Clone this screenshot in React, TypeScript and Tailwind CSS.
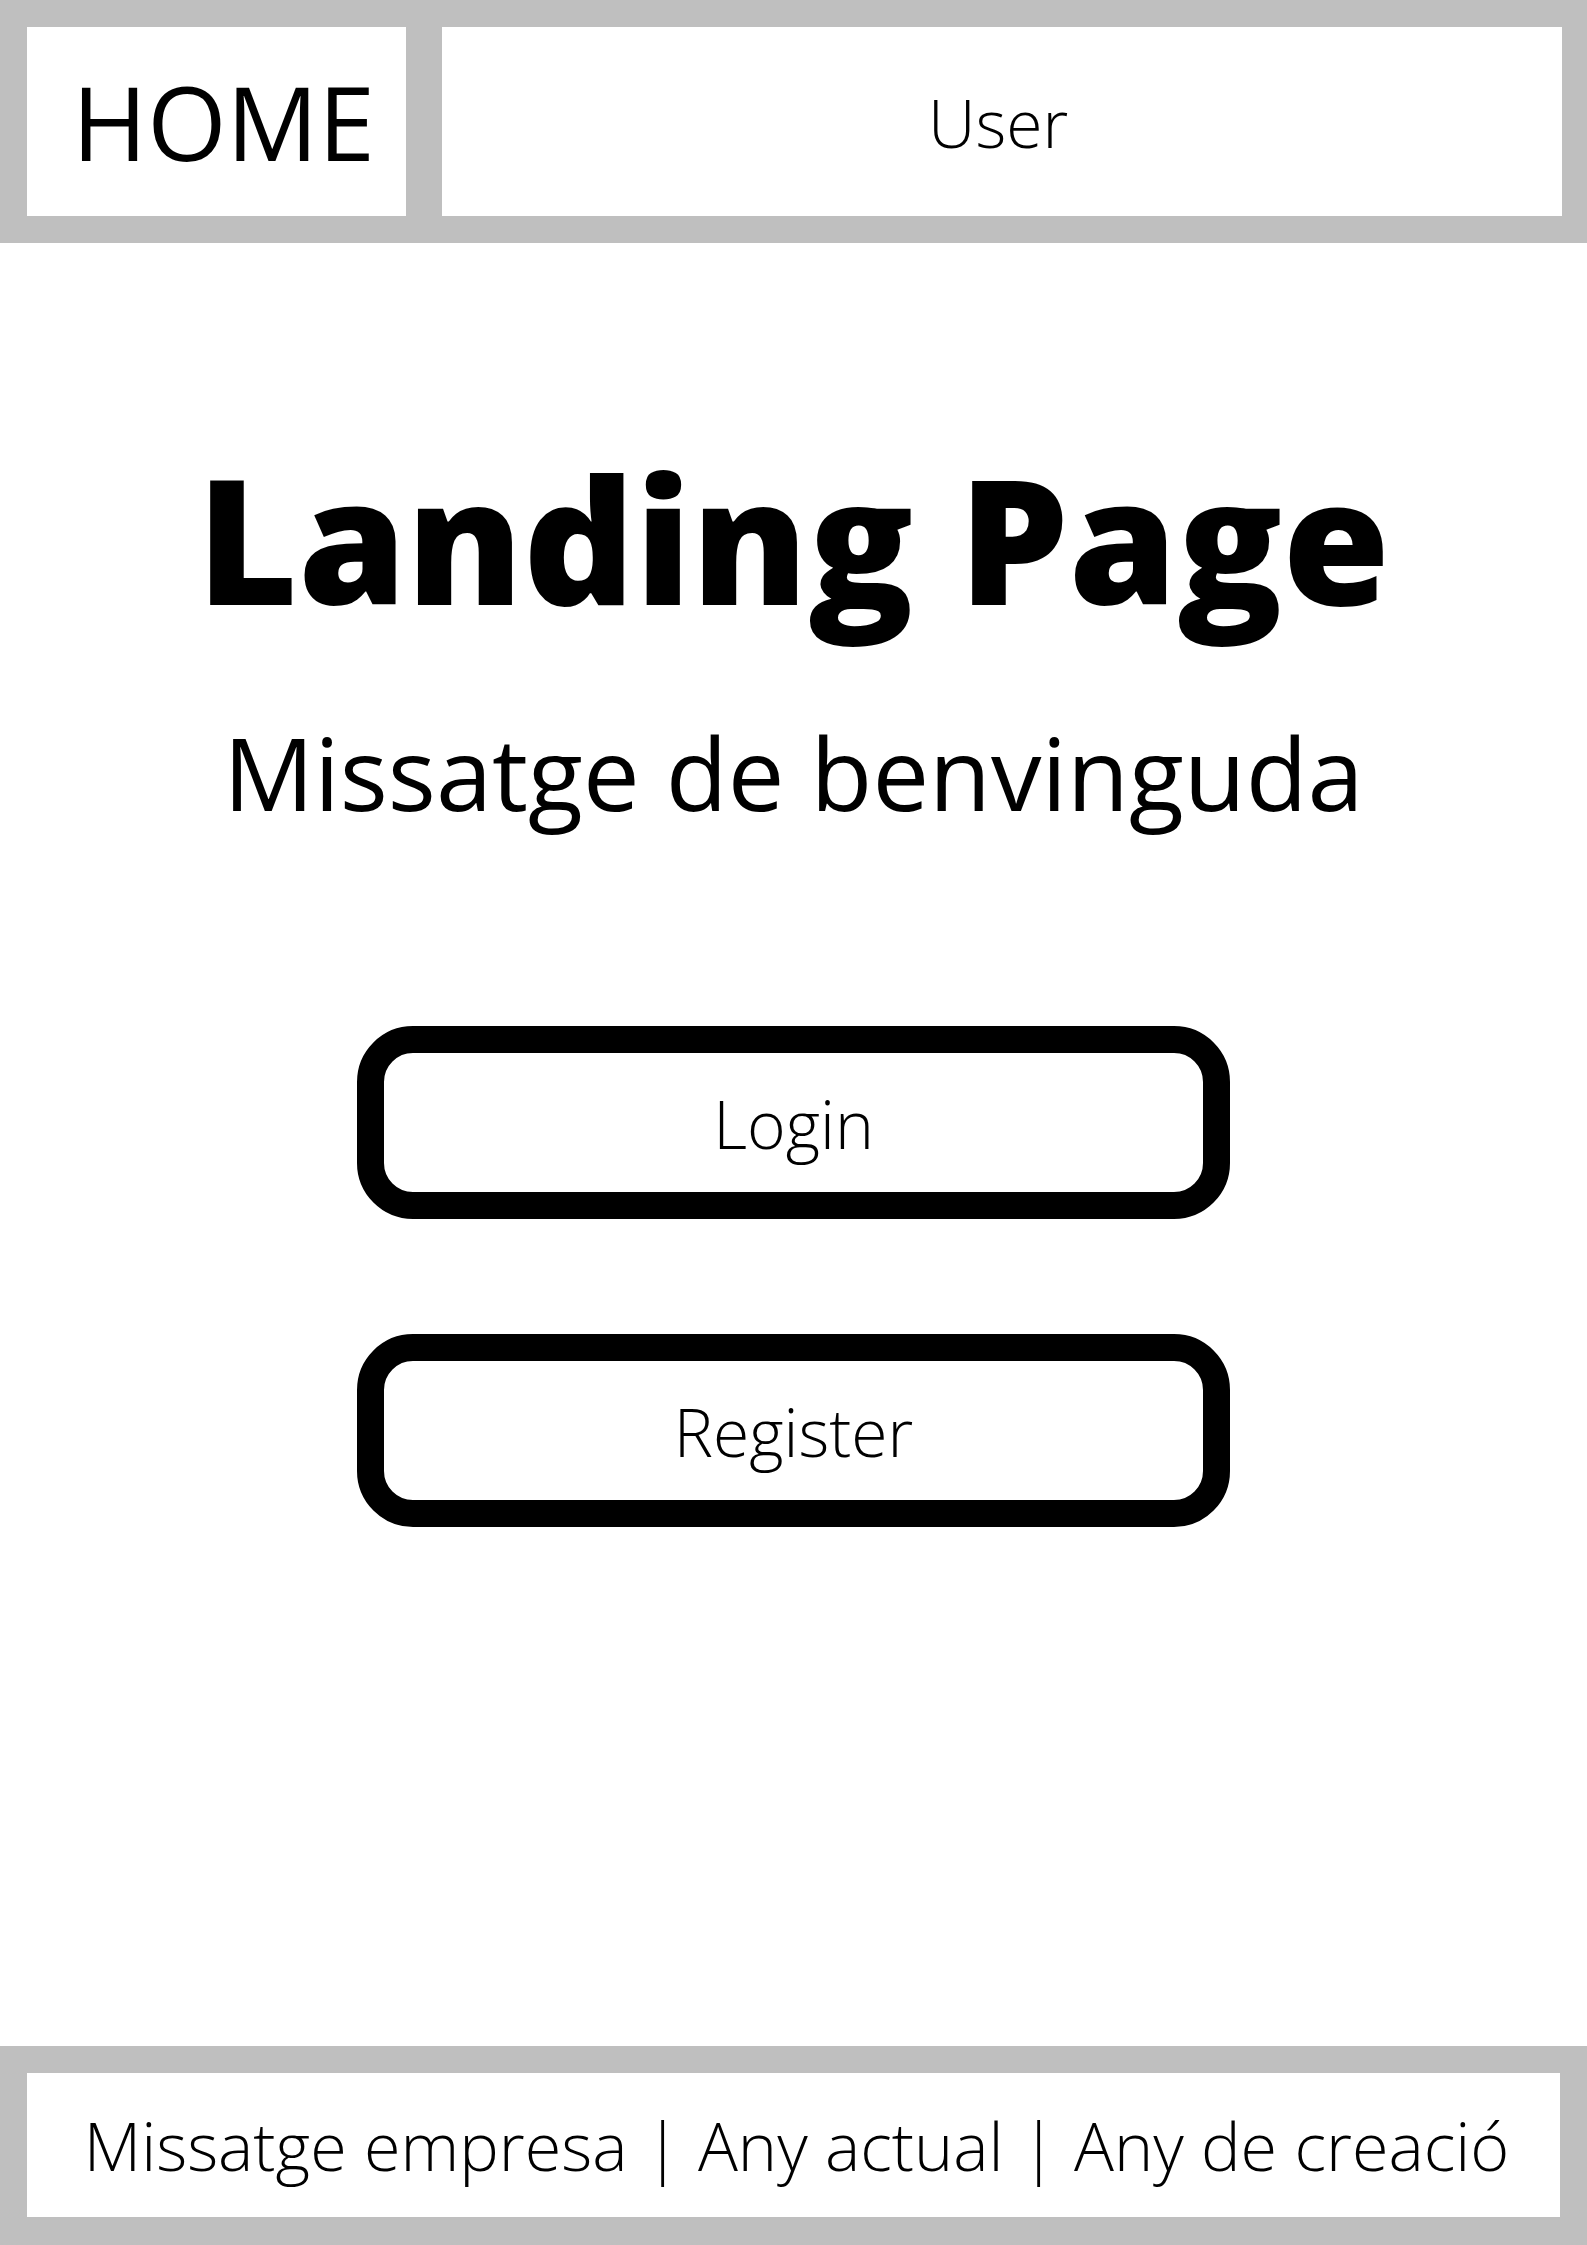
export default function App() {
  return (
    <div
      className="flex min-h-screen flex-col bg-white text-black"
      style={{ fontFamily: '"Open Sans", "Liberation Sans", sans-serif' }}
    >
      <header className="flex h-[243px] shrink-0 gap-[36px] bg-[#bfbfbf] pb-[27px] pl-[27px] pr-[25px] pt-[27px]">
        <div className="flex w-[379px] items-center justify-center bg-white pl-[14px]">
          <span className="text-[102px] leading-none">HOME</span>
        </div>
        <div className="flex flex-1 items-center justify-center bg-white pr-[8px]">
          <span className="text-[66px] font-light leading-none">User</span>
        </div>
      </header>

      <main className="flex flex-1 flex-col items-center">
        <h1 className="mt-[208px] text-[174px] font-extrabold leading-none">Landing Page</h1>
        <p className="mt-[97px] text-[101px] leading-none">Missatge de benvinguda</p>

        <div className="mt-[203px] flex flex-col gap-[115px]">
          <button
            type="button"
            className="flex h-[193px] w-[873px] items-center justify-center rounded-[56px] border-[27px] border-black bg-white"
          >
            <span className="text-[66px] font-light leading-none">Login</span>
          </button>
          <button
            type="button"
            className="flex h-[193px] w-[873px] items-center justify-center rounded-[56px] border-[27px] border-black bg-white"
          >
            <span className="text-[66px] font-light leading-none">Register</span>
          </button>
        </div>
      </main>

      <footer className="flex h-[199px] shrink-0 bg-[#bfbfbf] px-[27px] pb-[28px] pt-[27px]">
        <div className="flex flex-1 items-center justify-center bg-white pl-[6px]">
          <span className="text-[66.5px] font-light leading-none">
            Missatge empresa | Any actual | Any de creació
          </span>
        </div>
      </footer>
    </div>
  );
}
